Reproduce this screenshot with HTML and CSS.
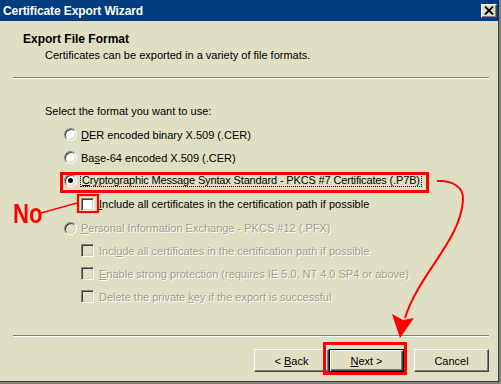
FILE: index.html
```html
<!DOCTYPE html>
<html lang="en">
<head>
    <meta charset="UTF-8">
    <title>Certificate Export Wizard</title>
    <link rel="stylesheet" href="styles.css">
</head>
<body>
<div class="window">
    <div class="titlebar">
        <span class="title">Certificate Export Wizard</span>
        <span class="close">
            <svg width="10" height="9" viewBox="0 0 10 9"><path d="M1 0.5 L9 8.5 M9 0.5 L1 8.5" stroke="#000" stroke-width="1.8"/></svg>
        </span>
    </div>

    <div class="header">
        <h1>Export File Format</h1>
        <p>Certificates can be exported in a variety of file formats.</p>
    </div>
    <div class="sep"></div>

    <div class="content">
        <p class="prompt">Select the format you want to use:</p>
        <ul class="options">
            <li class="opt"><span class="radio"></span><span><u>D</u>ER encoded binary X.509 (.CER)</span></li>
            <li class="opt"><span class="radio"></span><span>Ba<u>s</u>e-64 encoded X.509 (.CER)</span></li>
            <li class="opt tight"><span class="radio checked"></span><span class="focus"><u>C</u>ryptographic Message Syntax Standard - PKCS #7 Certificates (.P7B)</span></li>
            <li class="opt sub loose"><span class="check"></span><span><u>I</u>nclude all certificates in the certification path if possible</span></li>
            <li class="opt tight disabled"><span class="radio"></span><span><u>P</u>ersonal Information Exchange - PKCS #12 (.PFX)</span></li>
            <li class="opt sub disabled"><span class="check"></span><span>Incl<u>u</u>de all certificates in the certification path if possible</span></li>
            <li class="opt sub disabled"><span class="check"></span><span><u>E</u>nable strong protection (requires IE 5.0, NT 4.0 SP4 or above)</span></li>
            <li class="opt sub disabled"><span class="check"></span><span>Delete the private <u>k</u>ey if the export is successful</span></li>
        </ul>
    </div>

    <div class="footer">
        <div class="sep"></div>
        <div class="buttons">
            <button class="btn">&lt; <u>B</u>ack</button>
            <button class="btn default"><u>N</u>ext &gt;</button>
            <button class="btn cancel">Cancel</button>
        </div>
    </div>

    <!-- annotations drawn over the dialog -->
    <svg class="annot" width="501" height="384" viewBox="0 0 501 384">
        <rect x="61.5" y="173.5" width="366" height="18" fill="none" stroke="#f00" stroke-width="3"/>
        <rect x="78" y="195" width="20" height="17" fill="none" stroke="#f00" stroke-width="2.2"/>
        <rect x="324.5" y="343.5" width="81" height="30" fill="none" stroke="#f00" stroke-width="3"/>
        <path d="M41 213 L77 203" stroke="#f00" stroke-width="1.3" fill="none"/>
        <path d="M437 181 C452 180 464 187 463 200 C461 240 418 275 405 318" stroke="#f00" stroke-width="2" fill="none"/>
        <path d="M400 338 L392 314 L403 320 L414 318 Z" fill="#f00"/>
    </svg>
    <span class="no">No</span>
</div>
</body>
</html>
```

FILE: styles.css
```css
* {
    box-sizing: border-box;
}

body {
    margin: 0;
    font-family: "Liberation Sans", Arial, sans-serif;
    font-size: 11px;
    color: #000000;
}

.window {
    position: relative;
    width: 501px;
    height: 384px;
    display: flex;
    flex-direction: column;
    background-color: #e0dfc3;
    border-right: 2px solid #808080;
    border-bottom: 2px solid #808080;
    box-shadow: inset -1px -1px 0 #404040;
}

.titlebar {
    height: 21px;
    display: flex;
    align-items: center;
    justify-content: space-between;
    padding: 0 2px 0 3px;
    background-color: #003c7e;
}

.title {
    color: #ffffff;
    font-weight: bold;
    font-size: 12px;
    letter-spacing: -0.1px;
}

.close {
    width: 16px;
    height: 14px;
    display: flex;
    align-items: center;
    justify-content: center;
    background-color: #e0dfc3;
    border: 1px solid;
    border-color: #ffffff #404040 #404040 #ffffff;
    box-shadow: inset -1px -1px 0 #808080;
}

.header {
    height: 56px;
    padding: 11px 0 0 23px;
}

.header h1 {
    margin: 0;
    font-size: 12px;
    font-weight: bold;
    line-height: 14px;
}

.header p {
    margin: 3px 0 0 22px;
    line-height: 13px;
}

.sep {
    height: 2px;
    margin: 0 10px 0 13px;
    border-top: 1px solid #808080;
    border-bottom: 1px solid #ffffff;
}

.content {
    flex: 1;
}

.prompt {
    margin: 26px 0 0 45px;
    line-height: 13px;
}

.options {
    list-style: none;
    margin: 5px 0 0 0;
    padding: 0 0 0 64px;
}

.opt {
    height: 23px;
    display: flex;
    align-items: center;
    gap: 4px;
}

.opt.tight {
    height: 22px;
}

.opt.loose {
    height: 26px;
}

.opt.sub {
    padding-left: 17px;
    gap: 5px;
}

.opt.disabled {
    color: #a09f8c;
    text-shadow: 1px 1px 0 #ffffff;
}

.radio {
    position: relative;
    width: 13px;
    height: 13px;
    flex: none;
    border-radius: 50%;
    background-color: #ffffff;
    border: 1px solid;
    border-color: #808080 #ffffff #ffffff #808080;
    box-shadow: inset 1px 1px 0 #404040, inset -1px -1px 0 #d4d0c8;
}

.radio.checked::after {
    content: "";
    position: absolute;
    left: 3px;
    top: 3px;
    width: 5px;
    height: 5px;
    border-radius: 50%;
    background-color: #000000;
}

.disabled .radio,
.disabled .check {
    background-color: #e0dfc3;
}

.check {
    width: 13px;
    height: 13px;
    flex: none;
    background-color: #ffffff;
    border: 1px solid;
    border-color: #808080 #ffffff #ffffff #808080;
    box-shadow: inset 1px 1px 0 #404040, inset -1px -1px 0 #d4d0c8;
}

.focus {
    outline: 1px dotted #000000;
    padding: 0 1px;
    letter-spacing: -0.15px;
}

.footer {
    padding-bottom: 10px;
}

.buttons {
    display: flex;
    justify-content: flex-end;
    padding: 12px 10px 0 0;
}

.btn {
    width: 75px;
    height: 23px;
    padding: 0;
    font-family: "Liberation Sans", Arial, sans-serif;
    font-size: 11px;
    color: #000000;
    background-color: #e0dfc3;
    border: 1px solid;
    border-color: #ffffff #404040 #404040 #ffffff;
    box-shadow: inset -1px -1px 0 #808080;
}

.btn.default {
    border: 1px solid #000000;
    box-shadow: inset 1px 1px 0 #ffffff, inset -1px -1px 0 #404040, inset -2px -2px 0 #808080;
}

.btn.cancel {
    margin-left: 10px;
}

.annot {
    position: absolute;
    left: 0;
    top: 0;
    pointer-events: none;
}

.no {
    position: absolute;
    left: 13px;
    top: 199px;
    font-size: 27px;
    font-weight: bold;
    line-height: 30px;
    color: #ff0000;
    transform: scaleX(0.82);
    transform-origin: left;
}
```
